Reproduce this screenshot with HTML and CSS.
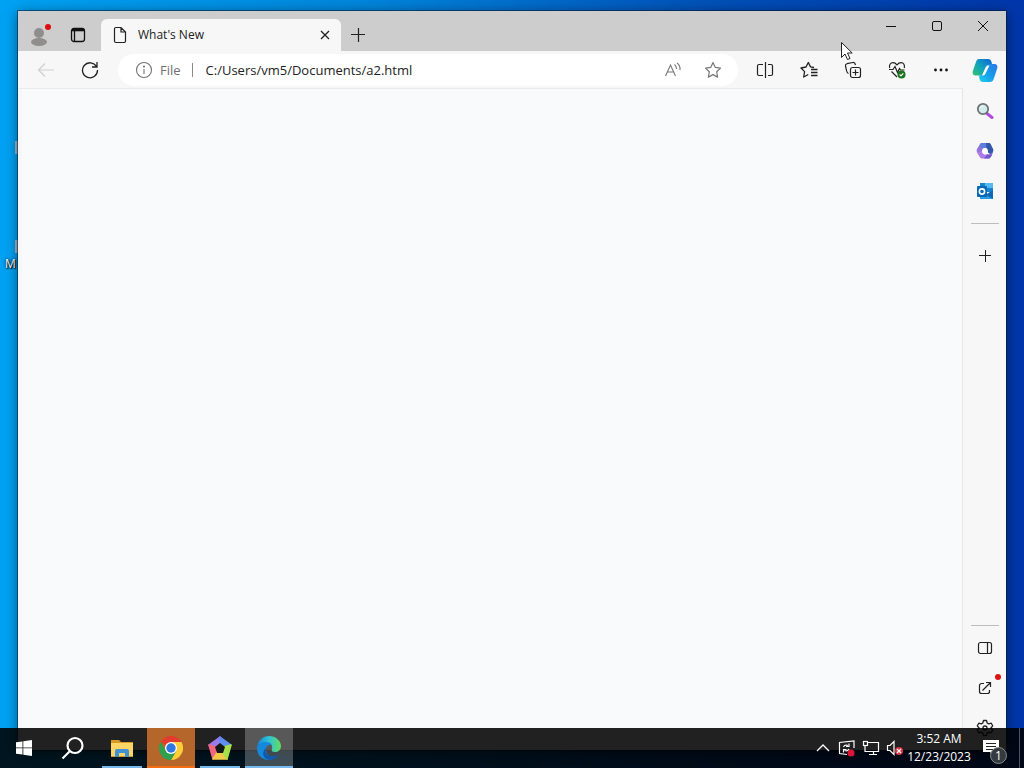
FILE: index.html
```
<!DOCTYPE html>
<html lang="en">
  <head>
    <meta charset="UTF-8" />
    <meta name="viewport" content="width=device-width, initial-scale=1.0" />
    <title>What's New</title>
    <link rel="stylesheet" href="styles.css" />
  </head>

  <body>
    <div class="desktop">
      <span class="shortcut-edge shortcut-first"></span>
      <span class="shortcut-edge shortcut-second"></span>
      <span class="shortcut-label">M</span>

      <div class="window">
        <header class="titlebar">
          <button class="title-btn profile-btn" aria-label="Profile">
            <svg width="22" height="24" viewBox="0 0 22 24">
              <circle cx="10" cy="10" r="5" fill="#8f8e8c" />
              <ellipse cx="10" cy="19" rx="8" ry="4" fill="#8f8e8c" />
              <circle cx="19" cy="4" r="3" fill="#e00b0b" />
            </svg>
          </button>
          <button class="title-btn" aria-label="Tab actions">
            <svg width="16" height="16" viewBox="0 0 16 16" fill="none" stroke="#111" stroke-width="1.3">
              <rect x="1.5" y="1.5" width="13" height="13" rx="2.5" />
              <path d="M4.5 4v10" />
              <path d="M2 3h12" stroke-width="2.6" />
            </svg>
          </button>
          <div class="tab">
            <svg width="14" height="18" viewBox="0 0 14 18" fill="none" stroke="#222" stroke-width="1.2">
              <path d="M3 1.500h5l4.500 4.500v9a1.500 1.500 0 0 1-1.500 1.500H3A1.500 1.500 0 0 1 1.500 15V3A1.500 1.500 0 0 1 3 1.500zM8 1.500V6h4.500" />
            </svg>
            <span class="tab-title">What's New</span>
            <button class="tab-close" aria-label="Close tab">
              <svg width="10" height="10" viewBox="0 0 10 10" stroke="#222" stroke-width="1.3">
                <path d="M1 1l8 8M9 1L1 9" />
              </svg>
            </button>
          </div>
          <button class="new-tab" aria-label="New tab">
            <svg width="14" height="14" viewBox="0 0 14 14" stroke="#222" stroke-width="1.2">
              <path d="M7.5 0v14M0 6.5h14" />
            </svg>
          </button>
          <div class="caption-btns">
            <button class="caption-btn" aria-label="Minimize">
              <svg width="10" height="10" viewBox="0 0 10 10" stroke="#111"><path d="M0 5.5h10" /></svg>
            </button>
            <button class="caption-btn" aria-label="Maximize">
              <svg width="12" height="12" viewBox="0 0 12 12" fill="none" stroke="#111">
                <rect x="1.5" y="1.5" width="9" height="9" rx="1.5" />
              </svg>
            </button>
            <button class="caption-btn" aria-label="Close">
              <svg width="12" height="12" viewBox="0 0 12 12" stroke="#111"><path d="M1 1l10 10M11 1L1 11" /></svg>
            </button>
          </div>
        </header>

        <div class="window-body">
          <main class="browser">
            <div class="toolbar">
              <button class="tool-btn" aria-label="Back" disabled>
                <svg width="18" height="16" viewBox="0 0 18 16" fill="none" stroke="#cfcfcf" stroke-width="1.2">
                  <path d="M8 1.5L1.5 8 8 14.5M1.500 8H17" />
                </svg>
              </button>
              <button class="tool-btn" aria-label="Refresh">
                <svg width="18" height="18" viewBox="0 0 18 18" fill="none" stroke="#222" stroke-width="1.3">
                  <path d="M15.5 5.5A7.500 7.500 0 1 0 16.500 9M16 1v5h-5" />
                </svg>
              </button>
              <form class="address-bar">
                <svg width="18" height="18" viewBox="0 0 18 18" fill="none" stroke="#707070" stroke-width="1.1">
                  <circle cx="9" cy="9" r="7.5" />
                  <path d="M9 8v5" />
                  <circle cx="9" cy="5.5" r="0.5" fill="#707070" />
                </svg>
                <label class="scheme" for="address">File</label>
                <input class="address" id="address" type="text" value="C:/Users/vm5/Documents/a2.html" />
                <button class="address-btn" type="button" aria-label="Read aloud">
                  <svg width="18" height="18" viewBox="0 0 18 18" fill="none" stroke="#777" stroke-width="1.1">
                    <path d="M1.5 15L6.500 4l5 11M3 11h7M10.500 3.500q2 1.500 2 4.500M13 2q3.500 2.500 3 7" />
                  </svg>
                </button>
                <button class="address-btn" type="button" aria-label="Add to favorites">
                  <svg width="18" height="18" viewBox="0 0 18 18" fill="none" stroke="#777" stroke-width="1.2" stroke-linejoin="round">
                    <path d="M9 1.5l2.300 4.900 5.200.7-3.800 3.700.9 5.300L9 13.600l-4.600 2.500.9-5.300L1.500 7.100l5.200-.7z" />
                  </svg>
                </button>
              </form>
              <button class="tool-btn" aria-label="Split screen">
                <svg width="18" height="18" viewBox="0 0 18 18" fill="none" stroke="#222" stroke-width="1.2">
                  <path d="M9.5 1v16M7 3.500H3A1.500 1.500 0 0 0 1.500 5v8A1.500 1.500 0 0 0 3 14.500h4M12 3.500h3A1.500 1.500 0 0 1 16.500 5v8a1.500 1.500 0 0 1-1.500 1.500h-3" />
                </svg>
              </button>
              <button class="tool-btn" aria-label="Favorites">
                <svg width="18" height="18" viewBox="0 0 18 18" fill="none" stroke="#222" stroke-width="1.3" stroke-linejoin="round">
                  <path d="M14 6.5l-3.500-.6L8.300 1.500 6 6 1 7l3.600 3.600L3.700 16l4.600-2.500M11 8.500h6.500M11 11.500h6.500M11 14.500h6.500" />
                </svg>
              </button>
              <button class="tool-btn" aria-label="Collections">
                <svg width="18" height="18" viewBox="0 0 18 18" fill="none" stroke="#222" stroke-width="1.2">
                  <path d="M4.5 12.500C3 12 2.800 11 2.500 9.500L1.500 5C1.200 3.500 2 3 3 2.700L9 1.500c1.500-.3 2 .5 2.500 2.500" />
                  <rect x="6.500" y="6.500" width="10" height="10" rx="2" />
                  <path d="M11.5 8.500v6M8.500 11.500h6" />
                </svg>
              </button>
              <button class="tool-btn" aria-label="Browser essentials">
                <svg width="18" height="18" viewBox="0 0 18 18" fill="none" stroke="#222" stroke-width="1.2">
                  <path d="M1.7 7C.8 4 2.500 1.700 5 1.700c2 0 3 1 4 2.200 1-1.200 2-2.200 4-2.200 2.700 0 4 2.300 3.300 5.300M3.500 10.500L9 16M1 8.500h4L7 5.500l2.500 6 2-4 1 1.500h4" />
                  <circle cx="13.5" cy="13.5" r="4" fill="#19751b" stroke="none" />
                  <path d="M11.7 13.5l1.300 1.300 2.300-2.500" stroke="#fff" />
                </svg>
              </button>
              <button class="tool-btn" aria-label="Settings and more">
                <svg width="16" height="4" viewBox="0 0 16 4" fill="#111">
                  <circle cx="2.5" cy="2" r="1.4" /><circle cx="8" cy="2" r="1.4" /><circle cx="13.5" cy="2" r="1.4" />
                </svg>
              </button>
            </div>
            <div class="page"></div>
          </main>

          <aside class="sidebar">
            <button class="side-btn" aria-label="Copilot">
              <svg width="26" height="26" viewBox="0 0 26 26">
                <defs>
                  <linearGradient id="pilot-left" x1="0" y1="1" x2="1" y2="0">
                    <stop offset="0" stop-color="#35c26c" /><stop offset=".45" stop-color="#11a6b8" /><stop offset="1" stop-color="#1264d8" />
                  </linearGradient>
                  <linearGradient id="pilot-right" x1="1" y1="0" x2="0" y2="1">
                    <stop offset="0" stop-color="#2b77e5" /><stop offset=".5" stop-color="#159bea" /><stop offset="1" stop-color="#20d0ec" />
                  </linearGradient>
                </defs>
                <path d="M7 1h9c2 0 3 1 3.500 3l.5 2c-3 0-4 1-5 4l-2 5c-1 2-2 2.500-4 2.500H4c-3 0-4-2-3-5L4 4c.6-2 1.500-3 3-3z" fill="url(#pilot-left)" />
                <path d="M19 6h3c3 0 4 2 3 5l-3 9c-1 3-2 4-4 4h-7c-2 0-3-1-3.500-3L7 17.500c3 0 4-1 5-4L14 9c1-2.500 2-3 5-3z" fill="url(#pilot-right)" />
                <path d="M15 7.500h2.500l-4 8c-.7 1.500-1.500 2-3.500 2l3.500-8z" fill="#fff" />
              </svg>
            </button>
            <button class="side-btn" aria-label="Search">
              <svg width="18" height="18" viewBox="0 0 18 18">
                <path d="M11 11.5l5 4" stroke="#b44be0" stroke-width="3" stroke-linecap="round" />
                <circle cx="7" cy="7" r="5.2" fill="#d3ebec" stroke="#6b7375" stroke-width="1.800" />
                <path d="M4 6q1-2 3-2" stroke="#fff" fill="none" />
              </svg>
            </button>
            <button class="side-btn" aria-label="Microsoft 365">
              <svg width="18" height="18" viewBox="0 0 18 18">
                <path d="M5.500 1H12L7.500 6 6 9.500 5 13H2.500L.8 9.500C.5 8.500.6 8 1 7l3-5q.5-1 1.500-1z" fill="#9272dc" />
                <path d="M6 1h7q1 0 1.500 1L17 7q.6 1 0 2.500L16 12l-3.500-3L11 6H5L4 2.500Q5 1 6 1z" fill="#5a7fdc" />
                <path d="M10 1h3q1 0 1.500 1L17 7q.6 1 0 2.500L15.500 13 12 10.500 10.500 6z" fill="#3457a8" />
                <path d="M1 10l5-1 2 3.500h5L16.500 11l-2 4q-.5 1.500-2 1.500H6q-1.500 0-2-1z" fill="#b07be8" />
                <path d="M11 12.500h5.500l-2 3q-.5 1-2 1H8z" fill="#7358cc" />
                <circle cx="9" cy="9.200" r="3" fill="#fff" />
              </svg>
            </button>
            <button class="side-btn" aria-label="Outlook">
              <svg width="18" height="18" viewBox="0 0 18 18">
                <path d="M4 1h13v9H4z" fill="#1683cf" /><path d="M9 1h8v5H9z" fill="#57b9ed" />
                <path d="M4 9l7 3 6-4v9H4z" fill="#279ee4" /><path d="M10 13l7-5v9z" fill="#1268b1" />
                <rect x="1" y="4" width="10" height="11" rx="1" fill="#0869b7" />
                <circle cx="6" cy="9.5" r="2.6" fill="none" stroke="#fff" stroke-width="1.6" />
              </svg>
            </button>
            <hr class="side-line" />
            <button class="side-btn" aria-label="Customize">
              <svg width="12" height="12" viewBox="0 0 12 12" stroke="#222"><path d="M6.5 0v12M0 5.500h12" /></svg>
            </button>

            <hr class="side-line side-line-bottom" />
            <button class="side-btn" aria-label="Hide sidebar">
              <svg width="16" height="14" viewBox="0 0 16 14" fill="none" stroke="#222" stroke-width="1.2">
                <rect x="1.5" y="1.5" width="13" height="11" rx="2" /><path d="M10.5 1.5v11" />
              </svg>
            </button>
            <button class="side-btn" aria-label="Open link externally">
              <svg width="14" height="14" viewBox="0 0 14 14" fill="none" stroke="#222" stroke-width="1.2">
                <path d="M6 2.5H3.500a2 2 0 0 0-2 2v6a2 2 0 0 0 2 2h6a2 2 0 0 0 2-2V9M4.500 9.500l8-8M8 1.500h4.500V6" />
              </svg>
              <span class="side-dot"></span>
            </button>
            <button class="side-btn" aria-label="Sidebar settings">
              <svg width="18" height="18" viewBox="0 0 18 18" fill="none" stroke="#222" stroke-width="1.3" stroke-linejoin="round">
                <path d="M7.5 1.500h3l.7 2.500 1.500.9 2.500-.7 1.500 2.600L14.900 9l1.800 2.200-1.500 2.600-2.500-.7-1.500.9-.7 2.500h-3L6.800 14l-1.500-.9-2.500.7-1.500-2.600L3.100 9 1.300 6.800l1.500-2.600 2.500.7L6.800 4z" />
                <circle cx="9" cy="9" r="2" />
              </svg>
            </button>
          </aside>
        </div>
      </div>

      <svg class="cursor" width="14" height="20" viewBox="0 0 14 20">
        <path d="M1.5 1.500v15L5 13l2.500 5.500 2.500-1L7.500 12h4.700z" fill="#fff" stroke="#222" />
      </svg>

      <footer class="taskbar">
        <button class="task-btn" aria-label="Start">
          <svg width="16" height="16" viewBox="0 0 16 16" fill="#fff">
            <path d="M0 2.300L6.500 1.400v6.100H0zM7.300 1.300L16 0v7.500H7.300zM0 8.300h6.500v6.300L0 13.700zM7.300 8.300H16V16l-8.700-1.300z" />
          </svg>
        </button>
        <button class="task-btn" aria-label="Search">
          <svg width="24" height="24" viewBox="0 0 24 24" fill="none" stroke="#fff" stroke-width="2.2">
            <circle cx="14" cy="9.5" r="7.5" /><path d="M9 15l-7.500 7.500" />
          </svg>
        </button>
        <button class="task-btn running" aria-label="File Explorer">
          <svg width="22" height="18" viewBox="0 0 22 18">
            <path d="M0 1h8l2 2h12v15H0z" fill="#d89a26" /><path d="M0 4h22v13H0z" fill="#ffd467" />
            <path d="M4 18v-6q0-2 2-2h10q2 0 2 2v6h-4v-4H8v4z" fill="#4092d4" />
          </svg>
        </button>
        <button class="task-btn alert" aria-label="Google Chrome">
          <svg width="24" height="24" viewBox="0 0 24 24">
            <path d="M12 12L1.600 6A12 12 0 0 1 22.400 6z" fill="#e23c2f" />
            <path d="M12 12V6h10.400A12 12 0 0 1 12 24l5.200-9z" fill="#fdce36" />
            <path d="M12 12l5.200 3L12 24A12 12 0 0 1 1.600 6l5.200 9z" fill="#2da14d" />
            <circle cx="12" cy="12" r="6" fill="#fff" /><circle cx="12" cy="12" r="4.700" fill="#2f78e3" />
          </svg>
        </button>
        <button class="task-btn running" aria-label="Pentagon app">
          <svg width="24" height="24" viewBox="0 0 24 24">
            <g stroke-width="1.5" stroke-linejoin="round">
              <path d="M12 12V1L1 9z" fill="#9b7bea" stroke="#9b7bea" />
              <path d="M12 12V1l11 8z" fill="#5f8df0" stroke="#5f8df0" />
              <path d="M12 12L5 23 1 9z" fill="#f0687f" stroke="#f0687f" />
              <path d="M12 12l7 11H5z" fill="#f7c948" stroke="#f7c948" />
              <path d="M12 12l11-3-4 14z" fill="#a8e048" stroke="#a8e048" />
            </g>
            <path d="M12 7l5 4-2 6H9l-2-6z" fill="#121718" />
          </svg>
        </button>
        <button class="task-btn active" aria-label="Microsoft Edge">
          <svg width="24" height="24" viewBox="0 0 24 24">
            <defs>
              <linearGradient id="edge-wave">
                <stop offset="0" stop-color="#1681d9" /><stop offset=".5" stop-color="#2fc4d3" /><stop offset="1" stop-color="#66db5c" />
              </linearGradient>
            </defs>
            <path d="M0 11C1 4 6 0 12 0c7 0 12 5 12 10 0 4-3 6-6 6-3 0-4-1-3-3 1-4-2-6-5-6-5 0-9 2-10 4z" fill="url(#edge-wave)" />
            <path d="M0 12c1-4 5-6 9-6 3 0 5 1 6 3-4-1-6 2-6 5 0 5 5 8 9 8-8 5-18 0-18-10z" fill="#1688dc" />
            <path d="M9 12c-2 6 4 9 8 8 3 0 5-2 5-1-2 3-6 5-10 5-6-1-8-8-3-12z" fill="#1159a9" />
          </svg>
        </button>

        <div class="tray">
          <button class="tray-btn" aria-label="Show hidden icons">
            <svg width="14" height="8" viewBox="0 0 14 8" fill="none" stroke="#fff" stroke-width="1.3"><path d="M1 7l6-6 6 6" /></svg>
          </button>
          <button class="tray-btn" aria-label="Update status">
            <svg width="18" height="18" viewBox="0 0 18 18" fill="none" stroke="#fff" stroke-width="1.2">
              <path d="M16 9V2L1.500 3.500v11L9 15.500M5.500 8q1-2.500 4.500-1.500M11 4.500v3H8M11 10q-1 2.500-4.500 1.500M5.500 13.500v-3h3" />
              <circle cx="13" cy="14" r="3.5" fill="#df1537" stroke="none" />
            </svg>
          </button>
          <button class="tray-btn" aria-label="Network">
            <svg width="18" height="16" viewBox="0 0 18 16" fill="none" stroke="#fff" stroke-width="1.2">
              <path d="M6 2.5h10.500v9H5M11.500 11.500v3M7 14.500h8M3 6v5.500h2" /><rect x="1.500" y="1.500" width="4" height="4" />
            </svg>
          </button>
          <button class="tray-btn" aria-label="Volume muted">
            <svg width="18" height="16" viewBox="0 0 18 16" fill="none" stroke="#fff" stroke-width="1.2">
              <path d="M1.5 5.500H4l4-4v13l-4-4H1.500z" />
              <circle cx="13" cy="11" r="4" fill="#d93442" stroke="none" /><path d="M11 9l4 4M15 9l-4 4" />
            </svg>
          </button>
          <button class="clock">
            <span>3:52 AM</span>
            <span>12/23/2023</span>
          </button>
          <button class="notifications" aria-label="Notifications">
            <svg width="16" height="16" viewBox="0 0 16 16">
              <path d="M0 0h16v12h-5v4l-4-4H0z" fill="#fff" /><path d="M3 3.500h10M3 6.500h10M3 9.500h7" stroke="#252525" />
            </svg>
            <span class="badge">1</span>
          </button>
          <span class="show-desktop"></span>
        </div>
      </footer>
    </div>
  </body>
</html>
```
FILE: styles.css
```
* {
  box-sizing: border-box;
}
body {
  margin: 0;
  font-family: "Open Sans", "Noto Sans", sans-serif;
  color: #222;
}
button {
  display: flex;
  align-items: center;
  justify-content: center;
  flex-shrink: 0;
  padding: 0;
  border: 0;
  background: transparent;
  font-family: inherit;
  color: inherit;
}
svg {
  flex-shrink: 0;
}

.desktop {
  position: relative;
  height: 100vh;
  overflow: hidden;
  background: linear-gradient(90deg, #00a2f4 0%, #0087dd 35%, #0050b8 70%, #0036aa 100%);
}
.shortcut-edge {
  position: absolute;
  left: 15px;
  width: 3px;
  height: 13px;
  background: #9db9d0;
}
.shortcut-first {
  top: 141px;
}
.shortcut-second {
  top: 240px;
}
.shortcut-label {
  position: absolute;
  left: 5px;
  top: 256px;
  font-size: 12px;
  line-height: 16px;
  color: #fff;
  text-shadow: 1px 1px 1px #000, 0 0 3px #000;
}

/* browser window */
.window {
  position: absolute;
  top: 11px;
  right: 18px;
  bottom: 18px;
  left: 18px;
  display: flex;
  flex-direction: column;
  background: #f7f7f7;
  box-shadow: 0 0 0 1px rgba(0, 20, 40, 0.5), 0 2px 12px rgba(0, 0, 0, 0.5);
}
.titlebar {
  display: flex;
  align-items: flex-end;
  height: 40px;
  padding-left: 3px;
  background: #cdcdcd;
}
.title-btn {
  width: 38px;
  height: 32px;
}
.tab {
  display: flex;
  align-items: center;
  width: 240px;
  height: 32px;
  margin-left: 4px;
  padding: 0 10px 0 12px;
  border-radius: 6px 6px 0 0;
  background: #f7f7f7;
}
.tab-title {
  flex: 1;
  padding-left: 11px;
  font-size: 12px;
  line-height: 16px;
}
.tab-close {
  width: 12px;
  height: 20px;
}
.new-tab {
  width: 34px;
  height: 32px;
}
.caption-btns {
  display: flex;
  align-self: flex-start;
  margin-left: auto;
}
.caption-btn {
  width: 46px;
  height: 30px;
}

.window-body {
  display: flex;
  flex: 1;
  min-height: 0;
}
.browser {
  display: flex;
  flex: 1;
  flex-direction: column;
  min-width: 0;
}
.toolbar {
  display: flex;
  align-items: center;
  height: 38px;
  padding-left: 6px;
  border-bottom: 1px solid #ebebeb;
}
.tool-btn {
  width: 44px;
  height: 32px;
}
.address-bar {
  display: flex;
  flex: 1;
  align-items: center;
  min-width: 0;
  height: 32px;
  margin: 0 5px 0 6px;
  padding: 0 5px 0 17px;
  border-radius: 16px;
  background: #fff;
}
.scheme {
  margin-left: 7px;
  padding-right: 11px;
  border-right: 1px solid #8a8a8a;
  font-size: 13px;
  line-height: 14px;
  color: #707070;
}
.address {
  flex: 1;
  min-width: 0;
  padding: 0 0 0 13px;
  border: 0;
  outline: 0;
  background: transparent;
  font-family: inherit;
  font-size: 13px;
  line-height: 20px;
  color: #222;
}
.address-btn {
  width: 40px;
  height: 28px;
}
.page {
  flex: 1;
  margin-left: 4px;
  border-right: 1px solid #e6e6e6;
  background: #f9fafc;
}

.sidebar {
  display: flex;
  flex-direction: column;
  align-items: center;
  width: 43px;
  padding-bottom: 2px;
}
.side-btn {
  position: relative;
  width: 40px;
  height: 40px;
}
.side-line {
  width: 28px;
  height: 1px;
  margin: 12px 0;
  border: 0;
  background: #bdbdbd;
}
.side-line-bottom {
  margin: auto 0 2px;
}
.side-dot {
  position: absolute;
  top: 6px;
  right: 4px;
  width: 6px;
  height: 6px;
  border-radius: 50%;
  background: #dc1414;
}

.cursor {
  position: absolute;
  left: 840px;
  top: 41px;
}

/* taskbar */
.taskbar {
  position: absolute;
  right: 0;
  bottom: 0;
  left: 0;
  display: flex;
  gap: 1px;
  height: 40px;
  background: rgba(0, 0, 0, 0.87);
}
.task-btn {
  width: 48px;
  height: 40px;
}
.running {
  background: linear-gradient(#76b9ed, #76b9ed) center bottom / 40px 2px no-repeat;
}
.active {
  background: rgba(255, 255, 255, 0.25);
  box-shadow: inset 0 -2px #76b9ed;
}
.alert {
  background: #b5662b;
  box-shadow: inset 0 -2px #f46d12;
}
.tray {
  display: flex;
  margin-left: auto;
  color: #fff;
}
.tray-btn {
  width: 24px;
  height: 40px;
}
.clock {
  flex-direction: column;
  width: 64px;
  font-size: 12px;
  line-height: 18px;
}
.notifications {
  position: relative;
  width: 40px;
  margin-right: 8px;
}
.badge {
  position: absolute;
  right: 4px;
  bottom: 4px;
  width: 17px;
  border: 1px solid #8b8b8b;
  border-radius: 50%;
  background: #343a40;
  font-size: 12px;
  line-height: 15px;
  text-align: center;
}
.show-desktop {
  width: 5px;
  border-left: 1px solid #4b5660;
}
```
